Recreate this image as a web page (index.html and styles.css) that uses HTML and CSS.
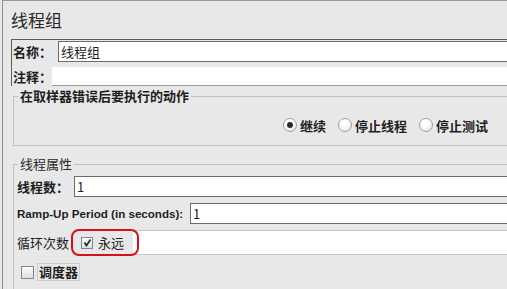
FILE: index.html
```html
<!DOCTYPE html>
<html lang="zh">
<head>
  <meta charset="UTF-8" />
  <title>线程组</title>
  <link rel="stylesheet" href="styles.css">
</head>
<body>
  <div class="frame">
    <h1 class="title">线程组</h1>

    <div class="name-panel">
      <div class="row row-name">
        <span class="label bold">名称：</span>
        <div class="field">线程组</div>
      </div>
      <div class="row row-comment">
        <span class="label bold">注释：</span>
        <div class="field plain"></div>
      </div>
    </div>

    <fieldset class="group group-error">
      <legend class="bold">在取样器错误后要执行的动作</legend>
      <div class="radio-row">
        <label class="radio"><span class="dot on"></span><span class="bold">继续</span></label>
        <label class="radio"><span class="dot"></span><span class="bold">停止线程</span></label>
        <label class="radio"><span class="dot"></span><span class="bold">停止测试</span></label>
      </div>
    </fieldset>

    <fieldset class="group group-thread">
      <legend>线程属性</legend>
      <div class="prop-row">
        <span class="label bold">线程数：</span>
        <div class="field f-threads">1</div>
      </div>
      <div class="prop-row">
        <span class="label en">Ramp-Up Period (in seconds):</span>
        <div class="field f-ramp">1</div>
      </div>
      <div class="prop-row loop-row">
        <span class="label">循环次数</span>
        <div class="loop-box">
          <span class="check on">
            <svg width="9" height="9" viewBox="0 0 9 9"><path d="M1.5 4.5 L3.5 7.5 L7.5 1.5" fill="none" stroke="#222" stroke-width="1.6"/></svg>
          </span>
          <span class="forever">永远</span>
        </div>
        <div class="field loop-field"></div>
        <div class="mark"></div>
      </div>
      <div class="sched-row">
        <span class="check"></span>
        <span class="sched-text bold">调度器</span>
      </div>
    </fieldset>
  </div>
</body>
</html>
```

FILE: styles.css
```css
html, body {
  margin: 0;
  height: 100%;
  overflow: hidden;
}

body {
  background: #e8e8e8;
  color: #1e1e1e;
  font-family: "Noto Sans CJK SC", "Liberation Sans", sans-serif;
  font-size: 13px;
}

.bold {
  font-weight: bold;
}

.frame {
  margin-left: 2px;
  height: 100%;
  border-left: 1px solid #8e8e8e;
  border-top: 1px solid #9a9a9a;
  box-sizing: border-box;
  display: flex;
  flex-direction: column;
}

.title {
  margin: 9px 0 0 8px;
  height: 20px;
  line-height: 20px;
  font-size: 17px;
  font-weight: normal;
  color: #2a2a2a;
}

/* name / comment */
.name-panel {
  margin: 9px 0 0 8px;
  border-top: 1px solid #5c5c5c;
  border-left: 1px solid #5c5c5c;
}

.row {
  display: flex;
  align-items: center;
}

.row-name {
  margin-top: 1px;
  height: 21px;
}

.row-name .label {
  width: 45px;
  padding-left: 1px;
}

.row-comment {
  margin-top: 5px;
  height: 19px;
}

.row-comment .label {
  width: 39px;
  padding-left: 1px;
}

.label {
  line-height: 16px;
  white-space: nowrap;
}

.field {
  flex: 1;
  align-self: stretch;
  background: #fff;
  border: 1px solid #6c6c6c;
  border-right: none;
  padding-left: 2px;
  line-height: 19px;
  box-sizing: border-box;
}

.field.plain {
  border: none;
  border-bottom: 1px solid #9c9c9c;
}

/* titled groups */
.group {
  margin: 0 0 0 10px;
  padding: 0;
  min-width: 0;
  border: 1px solid #b9c2cf;
  border-right: none;
  box-sizing: border-box;
}

.group legend {
  margin-left: 4px;
  padding: 0 2px;
  line-height: 14px;
}

.group-error {
  margin-top: 3px;
  height: 57px;
  flex: none;
}

.radio-row {
  display: flex;
  align-items: center;
  height: 16px;
  margin-top: 14px;
  padding-left: 269px;
  gap: 12px;
}

.radio {
  display: flex;
  align-items: center;
  gap: 3px;
}

.dot {
  width: 12px;
  height: 12px;
  border-radius: 50%;
  border: 1px solid #9aa2ab;
  background: radial-gradient(circle at 40% 35%, #fff 30%, #dcdcdc);
  display: flex;
  align-items: center;
  justify-content: center;
}

.dot.on::after {
  content: "";
  width: 6px;
  height: 6px;
  border-radius: 50%;
  background: #2a2a2a;
}

.group-thread {
  margin-top: 11px;
  flex: 1;
  border-bottom: none;
}

.group-thread legend {
  color: #2a2a2a;
}

.prop-row {
  display: flex;
  align-items: center;
  height: 21px;
  margin-top: 6px;
}

.group-thread legend + .prop-row {
  margin-top: 5px;
}

.prop-row .label {
  padding-left: 3px;
}

.prop-row:first-of-type .label {
  width: 57px;
}

.label.en {
  font-family: "Liberation Sans", sans-serif;
  font-weight: bold;
  font-size: 11.6px;
  width: 173px;
}

.loop-row {
  position: relative;
  height: 25px;
}

.loop-row .label {
  width: 54px;
}

.loop-box {
  display: flex;
  align-items: center;
  width: 62px;
  padding-left: 10px;
  box-sizing: border-box;
}

.forever {
  margin-left: 5px;
}

.loop-field {
  border: none;
  border-top: 1px solid #c4c4c4;
  border-bottom: 1px solid #c4c4c4;
}

.check {
  width: 12px;
  height: 12px;
  border: 1px solid #7d8894;
  background: linear-gradient(#fdfdfd, #dedede);
  display: flex;
  align-items: center;
  justify-content: center;
  box-sizing: border-box;
}

.mark {
  position: absolute;
  left: 57px;
  top: -1px;
  width: 68px;
  height: 27px;
  border: 2px solid #d4101c;
  border-radius: 8px;
  box-sizing: border-box;
}

.sched-row {
  display: flex;
  align-items: center;
  margin-top: 8px;
  padding-left: 7px;
  height: 18px;
}

.sched-row .check {
  width: 13px;
  height: 13px;
}

.sched-text {
  margin-left: 3px;
  padding: 0 1px;
  border: 1px solid #c5cfd6;
  line-height: 16px;
}
```
